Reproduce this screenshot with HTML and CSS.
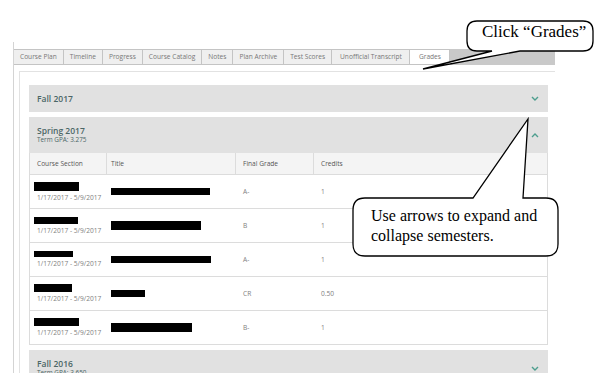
FILE: index.html
```html
<!DOCTYPE html>
<html lang="en">
<head>
    <meta charset="UTF-8">
    <meta name="viewport" content="width=device-width, initial-scale=1.0">
    <title>Grades</title>
    <link rel="stylesheet" href="styles.css">
</head>
<body>
    <div class="page">
        <div class="frame">
            <ul class="tabs">
                <li class="tab">Course Plan</li>
                <li class="tab">Timeline</li>
                <li class="tab">Progress</li>
                <li class="tab">Course Catalog</li>
                <li class="tab">Notes</li>
                <li class="tab">Plan Archive</li>
                <li class="tab">Test Scores</li>
                <li class="tab wide">Unofficial Transcript</li>
                <li class="tab active">Grades</li>
            </ul>
            <div class="content">
                <!-- collapsed term -->
                <section class="term">
                    <div class="term-head">
                        <div class="term-name">Fall 2017</div>
                        <svg class="chev" viewBox="0 0 8 5"><polyline points="1,1 4,4 7,1"/></svg>
                    </div>
                </section>

                <!-- open term -->
                <section class="term">
                    <div class="term-head tall">
                        <div>
                            <div class="term-name">Spring 2017</div>
                            <div class="gpa">Term GPA: 3.275</div>
                        </div>
                        <svg class="chev" viewBox="0 0 8 5"><polyline points="1,4 4,1 7,4"/></svg>
                    </div>
                    <div class="grades">
                        <div class="row head">
                            <div class="cell">Course Section</div>
                            <div class="cell c-title">Title</div>
                            <div class="cell">Final Grade</div>
                            <div class="cell">Credits</div>
                        </div>
                        <div class="row">
                            <div class="cell c-course"><span class="hide" style="width:45px;height:9px"></span><span class="dates">1/17/2017 - 5/9/2017</span></div>
                            <div class="cell c-title"><span class="hide" style="width:99px;height:7px"></span></div>
                            <div class="cell">A-</div>
                            <div class="cell">1</div>
                        </div>
                        <div class="row">
                            <div class="cell c-course"><span class="hide" style="width:44px;height:7px"></span><span class="dates">1/17/2017 - 5/9/2017</span></div>
                            <div class="cell c-title"><span class="hide" style="width:90px;height:9px"></span></div>
                            <div class="cell">B</div>
                            <div class="cell">1</div>
                        </div>
                        <div class="row">
                            <div class="cell c-course"><span class="hide" style="width:39px;height:6px"></span><span class="dates">1/17/2017 - 5/9/2017</span></div>
                            <div class="cell c-title"><span class="hide" style="width:100px;height:7px"></span></div>
                            <div class="cell">A-</div>
                            <div class="cell">1</div>
                        </div>
                        <div class="row">
                            <div class="cell c-course"><span class="hide" style="width:38px;height:8px"></span><span class="dates">1/17/2017 - 5/9/2017</span></div>
                            <div class="cell c-title"><span class="hide" style="width:34px;height:7px"></span></div>
                            <div class="cell">CR</div>
                            <div class="cell">0.50</div>
                        </div>
                        <div class="row">
                            <div class="cell c-course"><span class="hide" style="width:45px;height:8px"></span><span class="dates">1/17/2017 - 5/9/2017</span></div>
                            <div class="cell c-title"><span class="hide" style="width:81px;height:9px"></span></div>
                            <div class="cell">B-</div>
                            <div class="cell">1</div>
                        </div>
                    </div>
                </section>

                <section class="term">
                    <div class="term-head tall">
                        <div>
                            <div class="term-name">Fall 2016</div>
                            <div class="gpa">Term GPA: 3.650</div>
                        </div>
                        <svg class="chev" viewBox="0 0 8 5"><polyline points="1,1 4,4 7,1"/></svg>
                    </div>
                </section>
            </div>
        </div>

        <!-- annotation bubbles over the page -->
        <svg class="callouts" viewBox="0 0 604 384">
            <path d="M477,21 H583 Q593,21 593,31 V41 Q593,51 583,51 H520 L423,69 L492,51 H477 Q467,51 467,41 V31 Q467,21 477,21 Z"/>
            <path d="M365,198 H473 L528,119 L523,198 H546 Q558,198 558,210 V244 Q558,256 546,256 H365 Q353,256 353,244 V210 Q353,198 365,198 Z"/>
        </svg>
        <div class="note note-tabs">Click “Grades”</div>
        <div class="note note-arrows">Use arrows to expand and<br>collapse semesters.</div>
    </div>
</body>
</html>
```

FILE: styles.css
```css
* {margin: 0; padding: 0; box-sizing: border-box;}
body {
    background: #fff;
    font-family: "Open Sans", "Liberation Sans", sans-serif;
}
.page {
    position: relative;
    width: 604px;
    height: 373px;
    overflow: hidden;
    padding-top: 42px;
}
.frame {
    margin-left: 13px;
    width: 542px;
    height: 400px;
    padding-top: 7px;
    border-left: 1px solid #d4d4d4;
}
.tabs {
    display: flex;
    list-style: none;
    height: 16px;
    background: #c9c9c9;
}
.tab {
    padding: 0 6px;
    line-height: 14px;
    font-size: 6.6px;
    color: #777;
    background: #efefef;
    border: 1px solid #c4c4c4;
    border-left: 0;
}
.tab.wide {
    padding: 0 7px 0 8px;
}
.tab.active {
    padding: 0 8px 0 9px;
    background: #fff;
}
.content {
    margin: 6px 0 0 5px;
    padding: 13px 7px 0 9px;
    border-top: 1px solid #e2e2e2;
    border-left: 1px solid #e2e2e2;
    height: 400px;
}
.term {
    margin-bottom: 5px;
}
.term-head {
    display: flex;
    justify-content: space-between;
    align-items: center;
    height: 27px;
    padding: 0 9px 0 8px;
    background: #e1e1e1;
}
.term-head.tall {
    height: auto;
    padding-top: 9px;
    padding-bottom: 9px;
}
.term-name {
    font-size: 8.5px;
    font-weight: 600;
    line-height: 10px;
    color: #4b6666;
}
.gpa {
    font-size: 6.4px;
    line-height: 8px;
    color: #4b6666;
}
.chev {
    width: 8px;
    height: 5px;
}
.chev polyline {
    fill: none;
    stroke: #4d9e8e;
    stroke-width: 1.4;
}
.grades {
    border: 1px solid #dcdcdc;
    border-top: 0;
}
.row {
    display: grid;
    grid-template-columns: 77px 129px 78px 1fr;
    height: 34px;
    border-bottom: 1px solid #dcdcdc;
    font-size: 6.6px;
    color: #808080;
}
.row:last-child {
    border-bottom: 0;
    height: 33px;
}
.row.head {
    height: 22px;
    background: #f4f4f4;
    color: #555;
}
.cell {
    display: flex;
    align-items: center;
    padding-left: 7px;
}
.head .cell {
    border-right: 1px solid #dcdcdc;
}
.head .cell:last-child {
    border-right: 0;
}
.c-title {
    padding-left: 4px;
}
.c-course {
    flex-direction: column;
    align-items: flex-start;
    justify-content: center;
    padding-left: 7px;
}
.hide {
    display: block;
    background: #000;
}
.c-course .hide {
    margin-left: -3px;
}
.dates {
    margin-top: 3px;
    line-height: 8px;
}
.callouts {
    position: absolute;
    left: 0;
    top: 0;
    width: 604px;
    height: 384px;
}
.callouts path {
    fill: #fff;
    stroke: #000;
    stroke-width: 1.3;
}
.note {
    position: absolute;
    font-family: "Liberation Serif", "Times New Roman", serif;
    font-size: 16px;
    line-height: 20px;
    color: #000;
}
.note-tabs {
    left: 482px;
    top: 22px;
    font-size: 17px;
}
.note-arrows {
    left: 371px;
    top: 206px;
}
```
